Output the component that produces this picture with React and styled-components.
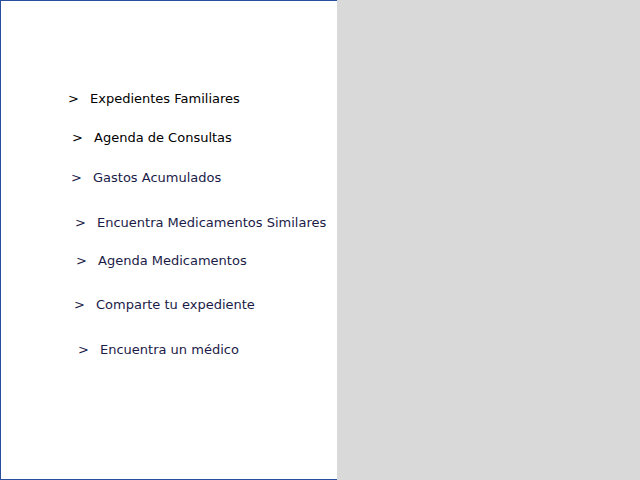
import React from 'react';
import styled, { createGlobalStyle } from 'styled-components';

const GlobalStyle = createGlobalStyle`
    html, body {
        margin: 0;
        padding: 0;
        background-color: #d9d9d9;
    }
`

const Wrapper = styled.section`
    display: flex;
    width: 640px;
    height: 480px;
    background-color: #d9d9d9;
`

const Menu = styled.nav`
    box-sizing: border-box;
    width: 337px;
    height: 480px;
    background-color: #ffffff;
    border: 1px solid #2a4e9e;
    border-right: none;
    padding-top: 90px;
    display: flex;
    flex-direction: column;
    font-family: "DejaVu Sans", sans-serif;
    font-size: 13px;
`

const Item = styled.a`
    display: flex;
    align-items: center;
    gap: 14px;
    height: 16px;
    line-height: 16px;
    margin-top: ${props => props.top}px;
    padding-left: ${props => props.left}px;
    color: ${props => props.dark ? '#000000' : '#1b1b48'};
    text-decoration: none;
    white-space: nowrap;
`

const Arrow = styled.span`
    display: inline-block;
    width: 8px;
`

const Empty = styled.div`
    flex: 1;
`

const items = [
    { label: 'Expedientes Familiares', top: 0, left: 67, dark: true },
    { label: 'Agenda de Consultas', top: 23, left: 71, dark: true },
    { label: 'Gastos Acumulados', top: 24, left: 70 },
    { label: 'Encuentra Medicamentos Similares', top: 29, left: 74 },
    { label: 'Agenda Medicamentos', top: 22, left: 75 },
    { label: 'Comparte tu expediente', top: 28, left: 73 },
    { label: 'Encuentra un médico', top: 29, left: 77 },
];

const App = () => {
    return (
        <Wrapper>
            <GlobalStyle />
            <Menu>
                {items.map(item => (
                    <Item key={item.label} top={item.top} left={item.left} dark={item.dark}>
                        <Arrow>&gt;</Arrow>
                        {item.label}
                    </Item>
                ))}
            </Menu>
            <Empty />
        </Wrapper>
    );
};

export default App;
